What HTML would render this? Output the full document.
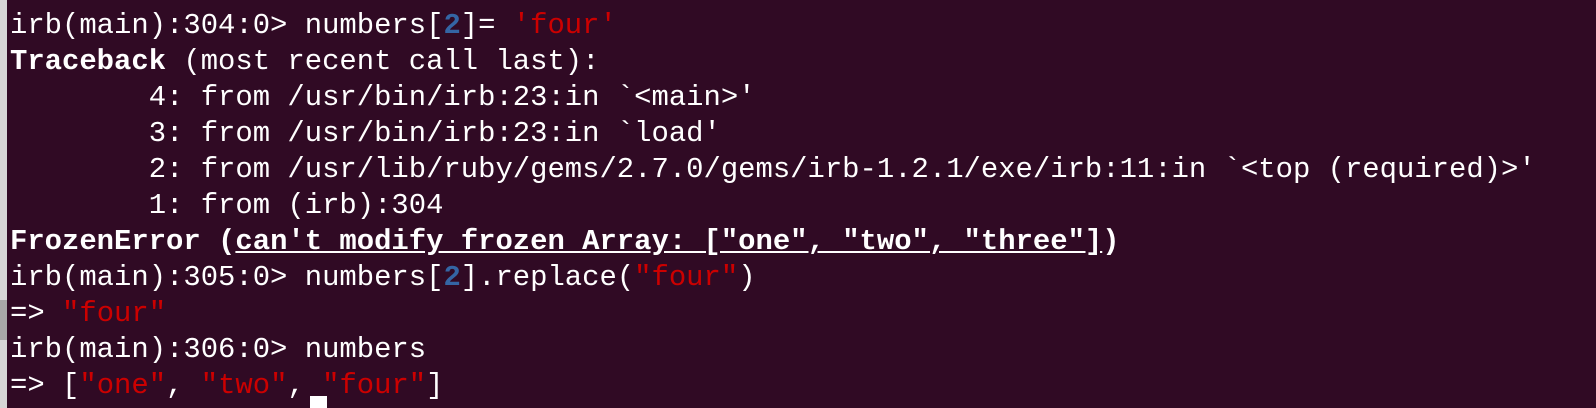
<!DOCTYPE html>
<html><head><style>
html,body{margin:0;padding:0;background:#300a24;width:1596px;height:408px;overflow:hidden;position:relative}
.bar{position:absolute;left:0;top:0;width:7px;height:408px;background:#d6d6d6}
.bar2{position:absolute;left:0;top:300px;width:7px;height:40px;background:#a8a8a8}
.l{position:absolute;left:10px;height:36px;margin:0;font-family:"Liberation Mono",monospace;font-size:28.9px;line-height:36px;color:#fff;white-space:pre}
.r{color:#cc0000}.b{color:#3465a4;font-weight:bold}.w{font-weight:bold}.u{text-decoration:underline}
.cur{position:absolute;left:310px;top:396px;width:17px;height:30px;background:#fff}
</style></head><body>
<div class="bar"></div><div class="bar2"></div>
<div class="l" style="top:8px">irb(main):304:0&gt; numbers[<span class="b">2</span>]= <span class="r">'four'</span></div>
<div class="l" style="top:44px"><span class="w">Traceback</span> (most recent call last):</div>
<div class="l" style="top:80px">        4: from /usr/bin/irb:23:in `&lt;main&gt;'</div>
<div class="l" style="top:116px">        3: from /usr/bin/irb:23:in `load'</div>
<div class="l" style="top:152px">        2: from /usr/lib/ruby/gems/2.7.0/gems/irb-1.2.1/exe/irb:11:in `&lt;top (required)&gt;'</div>
<div class="l" style="top:188px">        1: from (irb):304</div>
<div class="l" style="top:224px"><span class="w">FrozenError (<span class="u">can't modify frozen Array: ["one", "two", "three"]</span>)</span></div>
<div class="l" style="top:260px">irb(main):305:0&gt; numbers[<span class="b">2</span>].replace(<span class="r">"four"</span>)</div>
<div class="l" style="top:296px">=&gt; <span class="r">"four"</span></div>
<div class="l" style="top:332px">irb(main):306:0&gt; numbers</div>
<div class="l" style="top:368px">=&gt; [<span class="r">"one"</span>, <span class="r">"two"</span>, <span class="r">"four"</span>]</div>
<div class="l" style="top:404px">irb(main):307:0&gt; </div>
<div class="cur"></div>
</body></html>
